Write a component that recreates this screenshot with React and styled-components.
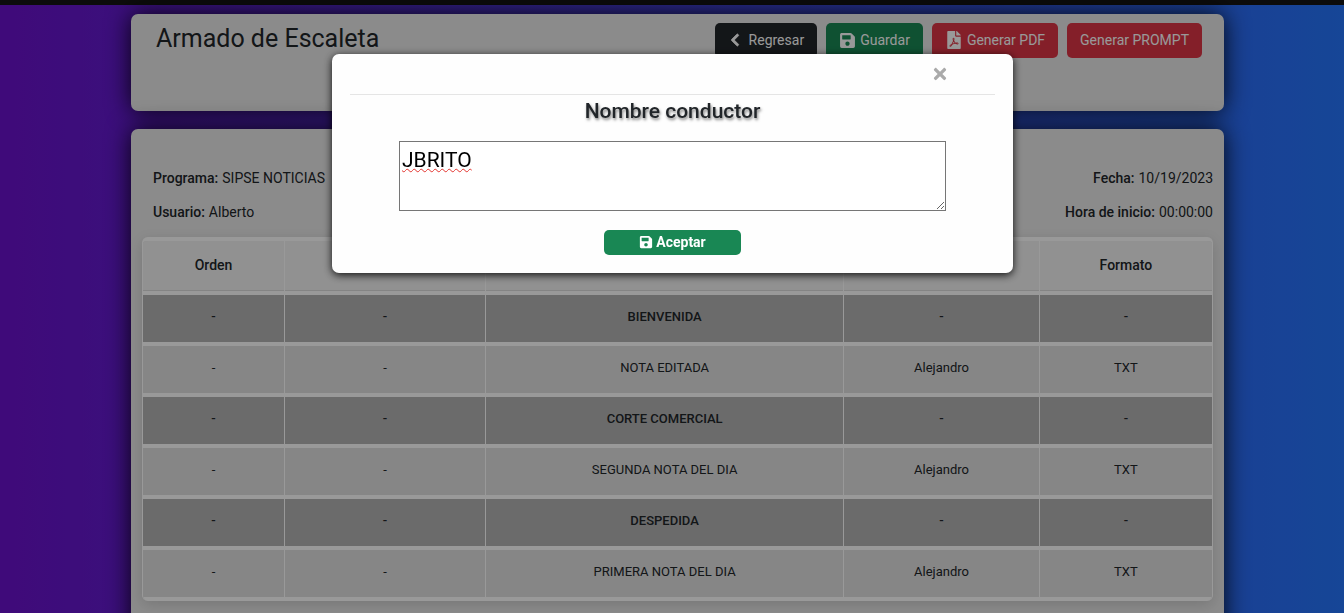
import React, { useState } from "react";
import styled, { createGlobalStyle } from "styled-components";
import { FaChevronLeft, FaSave, FaFilePdf, FaTimes } from "react-icons/fa";

const GlobalStyle = createGlobalStyle`
  *, *::before, *::after { box-sizing: border-box; }
  body {
    margin: 0;
    min-height: 100vh;
    background: linear-gradient(to right, #6a11cb, #2575fc) fixed;
    color: #212529;
    font-family: Roboto, "Liberation Sans", sans-serif;
    font-size: 14px;
    line-height: 20px;
    overflow: hidden;
  }
`;

const TopBar = styled.header`
  height: 5px;
  background: #151515;
`;

const Main = styled.main`
  display: flex;
  flex-direction: column;
  gap: 18px;
  padding: 9px 120px 0 131px;
`;

const Card = styled.section`
  background: #e8e8e8;
  border-radius: 7px;
  box-shadow: 0 0 24px rgba(0, 0, 0, 0.9);
`;

const TitleCard = styled(Card)`
  display: flex;
  justify-content: space-between;
  align-items: flex-start;
  min-height: 97px;
  padding: 9px 22px 9px 25px;
`;

const Title = styled.h1`
  margin: 0;
  font-size: 25px;
  line-height: 32px;
  font-weight: 400;
`;

const Toolbar = styled.div`
  display: flex;
  gap: 9px;
`;

const tones = { dark: "#212529", success: "#198754", danger: "#dc3545" };

const Button = styled.button`
  display: flex;
  align-items: center;
  justify-content: center;
  gap: ${(p) => p.$gap || 5}px;
  height: 35px;
  padding: 0 13px 1px;
  border: 0;
  border-radius: 5px;
  background: ${(p) => tones[p.$tone]};
  color: #fff;
  font: 400 14px/20px Roboto, "Liberation Sans", sans-serif;
  white-space: nowrap;
`;

const BackIcon = styled(FaChevronLeft)`
  stroke: currentColor;
  stroke-width: 32px;
`;

const RundownCard = styled(Card)`
  padding: 39px 11px 60px;
`;

const Meta = styled.dl`
  display: grid;
  grid-template-columns: 1fr auto;
  row-gap: 14px;
  margin: 0 0 15px 11px;
`;

const MetaItem = styled.div`
  display: flex;
  gap: 4px;
  justify-content: ${(p) => (p.$end ? "flex-end" : "flex-start")};
  dt { font-weight: 500; }
  dd { margin: 0; }
`;

const TableFrame = styled.div`
  border: 1px solid #fff;
  border-width: 4px 1px 0;
  border-radius: 6px;
  overflow: hidden;
  box-shadow: 0 4px 14px rgba(0, 0, 0, 0.14);
`;

const Table = styled.table`
  width: 100%;
  table-layout: fixed;
  border-collapse: separate;
  border-spacing: 0;
  text-align: center;
`;

const Col = styled.col`
  width: ${(p) => p.$width};
`;

const HeadCell = styled.th`
  height: 54px;
  padding: 0 0 2px;
  background: #f2f2f2;
  border-bottom: 4px solid #fff;
  box-shadow: inset 0 -1px 0 #dcdcdc;
  font-weight: 500;
  & + & { border-left: 1px solid #fff; }
`;

const Cell = styled.td`
  height: 51px;
  padding: 0 0 4px;
  border-bottom: 4px solid #fff;
  background: ${(p) => (p.$block ? "#b3b3b3" : "#dfdfdf")};
  font-size: 13px;
  font-weight: ${(p) => (p.$block ? 500 : 400)};
  & + & { border-left: 1px solid #fff; }
`;

const Backdrop = styled.div`
  position: fixed;
  inset: 0;
  display: flex;
  justify-content: center;
  align-items: flex-start;
  padding: 54px 16px 0 17px;
  background: rgba(0, 0, 0, 0.4);
`;

const Dialog = styled.form`
  width: 681px;
  max-width: 100%;
  padding: 0 18px 18px;
  border-radius: 7px;
  background: #fefefe;
  box-shadow: 0 2px 8px rgba(0, 0, 0, 0.9);
  display: flex;
  flex-direction: column;
  align-items: center;
`;

const DialogHead = styled.div`
  align-self: stretch;
  display: flex;
  justify-content: flex-end;
  align-items: center;
  height: 41px;
  padding-right: 46px;
  border-bottom: 1px solid #e5e5e5;
`;

const CloseButton = styled.button`
  display: flex;
  padding: 0;
  border: 0;
  background: none;
  color: #aaa;
`;

const DialogLabel = styled.label`
  margin: 4px 0 18px;
  font-size: 21px;
  line-height: 24px;
  font-weight: 500;
  text-shadow: 1px 2px 3px rgba(0, 0, 0, 0.5);
`;

const NameField = styled.textarea`
  width: 547px;
  max-width: 100%;
  height: 70px;
  padding: 6px 2px;
  border: 1px solid #767676;
  border-radius: 0;
  outline: 0;
  background: #fff;
  color: #000;
  font: 400 21px/24px Roboto, "Liberation Sans", sans-serif;
  text-decoration: underline wavy #e3342f 1px;
  resize: both;
`;

const AcceptButton = styled(Button)`
  width: 137px;
  height: 25px;
  margin-top: 19px;
  font-weight: 700;
`;

const columns = [
  ["Orden", "13.2%"],
  ["Hora", "18.8%"],
  ["Nota", "33.5%"],
  ["Autor", "18.3%"],
  ["Formato", "16.2%"],
];

const rows = [
  { title: "BIENVENIDA", block: true },
  { title: "NOTA EDITADA" },
  { title: "CORTE COMERCIAL", block: true },
  { title: "SEGUNDA NOTA DEL DIA" },
  { title: "DESPEDIDA", block: true },
  { title: "PRIMERA NOTA DEL DIA" },
];

export default function App() {
  const [name, setName] = useState("JBRITO");
  return (
    <>
      <GlobalStyle />
      <TopBar />
      <Main>
        <TitleCard>
          <Title>Armado de Escaleta</Title>
          <Toolbar>
            <Button $tone="dark" $gap={7}><BackIcon size={14} />Regresar</Button>
            <Button $tone="success" $gap={4}><FaSave size={17} />Guardar</Button>
            <Button $tone="danger" $gap={4}><FaFilePdf size={18} />Generar PDF</Button>
            <Button $tone="danger">Generar PROMPT</Button>
          </Toolbar>
        </TitleCard>
        <RundownCard>
          <Meta>
            <MetaItem><dt>Programa:</dt><dd>SIPSE NOTICIAS</dd></MetaItem>
            <MetaItem $end><dt>Fecha:</dt><dd>10/19/2023</dd></MetaItem>
            <MetaItem><dt>Usuario:</dt><dd>Alberto</dd></MetaItem>
            <MetaItem $end><dt>Hora de inicio:</dt><dd>00:00:00</dd></MetaItem>
          </Meta>
          <TableFrame>
            <Table>
              <colgroup>
                {columns.map(([label, width]) => <Col key={label} $width={width} />)}
              </colgroup>
              <thead>
                <tr>{columns.map(([label]) => <HeadCell key={label}>{label}</HeadCell>)}</tr>
              </thead>
              <tbody>
                {rows.map(({ title, block }) => (
                  <tr key={title}>
                    <Cell $block={block}>-</Cell>
                    <Cell $block={block}>-</Cell>
                    <Cell $block={block}>{title}</Cell>
                    <Cell $block={block}>{block ? "-" : "Alejandro"}</Cell>
                    <Cell $block={block}>{block ? "-" : "TXT"}</Cell>
                  </tr>
                ))}
              </tbody>
            </Table>
          </TableFrame>
        </RundownCard>
      </Main>
      <Backdrop>
        <Dialog role="dialog" aria-modal="true" onSubmit={(e) => e.preventDefault()}>
          <DialogHead>
            <CloseButton type="button" aria-label="Cerrar"><FaTimes size={18} /></CloseButton>
          </DialogHead>
          <DialogLabel htmlFor="conductor">Nombre conductor</DialogLabel>
          <NameField id="conductor" value={name} onChange={(e) => setName(e.target.value)} />
          <AcceptButton $tone="success" $gap={3}><FaSave size={14} />Aceptar</AcceptButton>
        </Dialog>
      </Backdrop>
    </>
  );
}
